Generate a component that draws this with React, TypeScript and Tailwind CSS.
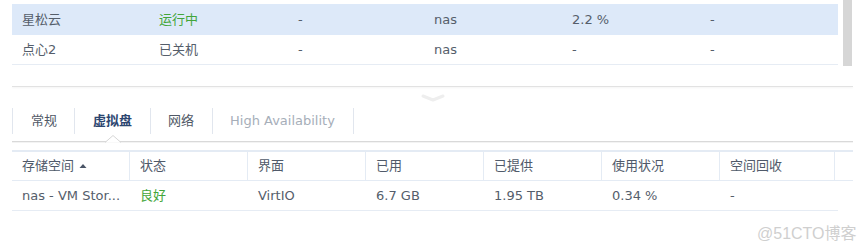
import React from "react";

const font = { fontFamily: '"DejaVu Sans", "Noto Sans CJK SC", sans-serif' };

const topCols = [137, 139, 136, 138, 138];
const topRows = [
  { cells: ["星松云", "运行中", "-", "nas", "2.2 %", "-"], active: true },
  { cells: ["点心2", "已关机", "-", "nas", "-", "-"], active: false },
];

const headCols = ["存储空间", "状态", "界面", "已用", "已提供", "使用状况", "空间回收"];
const dataRow = ["nas - VM Stor...", "良好", "VirtIO", "6.7 GB", "1.95 TB", "0.34 %", "-"];

export default function App() {
  return (
    <div className="relative w-[865px] h-[241px] bg-white overflow-hidden text-[13px] text-[#555e6b]" style={font}>
      {/* top table */}
      <div className="flex">
        <div className="ml-[12px] w-[826px] pt-[4px]">
          {topRows.map((r, i) => (
            <div
              key={i}
              className={`flex items-center ${i === 0 ? "h-[31px] bg-[#dde9f9]" : "h-[30px] border-b border-[#e6ecf4]"}`}
            >
              {r.cells.map((c, j) => (
                <div
                  key={j}
                  className={`pl-[10px] whitespace-nowrap ${j === 1 && i === 0 ? "text-[#43a63a]" : ""}`}
                  style={{ width: j < 5 ? topCols[j] : undefined }}
                >
                  {c}
                </div>
              ))}
            </div>
          ))}
        </div>
        <div className="ml-[5px] w-[9px] h-[66px] bg-[#d6d6d6]" />
      </div>

      {/* splitter */}
      <div className="mt-[20px] ml-[12px] w-[841px] h-[1px] bg-[#e2e2e2] shadow-[0_1px_2px_rgba(0,0,0,0.06)]" />
      <div className="flex justify-center h-[21px]">
        <svg width="24" height="10" viewBox="0 0 24 10" className="mt-[6px]">
          <path d="M2 3 L12 7 L22 3" stroke="#eeeeee" strokeWidth="3" fill="none" strokeLinecap="round" strokeLinejoin="round" />
        </svg>
      </div>

      {/* tabs */}
      <div className="relative ml-[12px] w-[841px]">
        <div className="flex h-[26px] items-center">
          <div className="w-[62px] h-full border-l border-[#e1e6ee] flex items-center pl-[18px] text-[#505866]">常规</div>
          <div className="w-[76px] h-full border-l border-[#e1e6ee] flex items-center pl-[18px] text-[#2c4670] font-bold">虚拟盘</div>
          <div className="w-[62px] h-full border-l border-[#e1e6ee] flex items-center pl-[17px] text-[#505866]">网络</div>
          <div className="w-[142px] h-full border-l border-r border-[#e1e6ee] flex items-center pl-[17px] text-[#a6aeb9]">High Availability</div>
        </div>
        <div className="mt-[7px] h-[2px] border-t border-[#d9d9d9] bg-[#f3f3f3]" />
        <svg className="absolute left-[93px] top-[27px]" width="16" height="8" viewBox="0 0 16 8">
          <path d="M0 7.5 L8 0.5 L16 7.5" stroke="#d6d6d6" strokeWidth="1" fill="white" />
        </svg>
      </div>

      {/* bottom table */}
      <div className="ml-[12px] mt-[7px] w-[841px]">
        <div className="flex h-[31px] items-stretch border-t-2 border-b border-[#e4ebf4]">
          {headCols.map((h, i) => (
            <div
              key={i}
              className={`flex items-center pl-[10px] ${i < 6 ? "w-[118px]" : "w-[115px]"} border-r border-[#e4ebf4] text-[#505a6a]`}
            >
              {h}
              {i === 0 && (
                <svg width="8" height="6" viewBox="0 0 8 6" className="ml-[5px]">
                  <path d="M0.5 5 L4 1 L7.5 5 Z" fill="#4a5566" />
                </svg>
              )}
            </div>
          ))}
        </div>
        <div className="flex h-[30px] items-center w-[826px] border-b border-[#e6ecf4]">
          {dataRow.map((c, i) => (
            <div
              key={i}
              className={`pl-[10px] whitespace-nowrap ${i === 1 ? "text-[#43a63a]" : ""}`}
              style={{ width: i < 6 ? 118 : 115 }}
            >
              {c}
            </div>
          ))}
        </div>
      </div>

      <div className="absolute left-[757px] top-[222px] text-[16px] text-[#cfcfcf]" style={{ fontFamily: '"Liberation Sans", "Noto Sans CJK SC", sans-serif' }}>
        @51CTO博客
      </div>
    </div>
  );
}
